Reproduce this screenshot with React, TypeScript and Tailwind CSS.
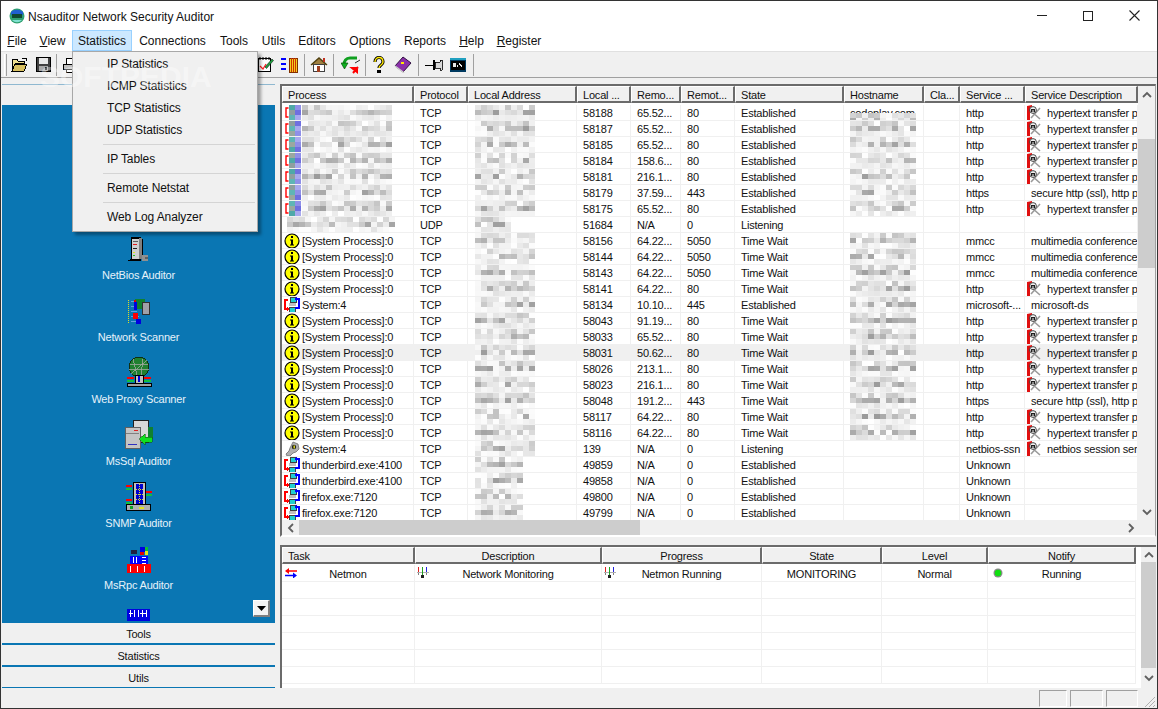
import type { ReactNode } from "react";

const FONT = "font-['Liberation_Sans',Arial,sans-serif]";

type Row = {
  process: string;
  icon: "blur" | "blurGrey" | "info" | "conn" | "key";
  proto: string;
  port: string;
  remote: string;
  rport: string;
  state: string;
  host: boolean;
  service: string;
  desc: string;
  skull?: boolean;
};

const HTTP = "hypertext transfer p";
const MM = "multimedia conference";
const SSL = "secure http (ssl), http p";

function r(
  process: string,
  icon: Row["icon"],
  proto: string,
  port: string,
  remote: string,
  rport: string,
  state: string,
  host: boolean,
  service: string,
  desc: string,
): Row {
  return { process, icon, proto, port, remote, rport, state, host, service, desc, skull: desc === HTTP || desc.startsWith("netbios") };
}

const SP = "[System Process]:0";
const rows: Row[] = [
  r("", "blur", "TCP", "58188", "65.52...", "80", "Established", true, "http", HTTP),
  r("", "blur", "TCP", "58187", "65.52...", "80", "Established", true, "http", HTTP),
  r("", "blur", "TCP", "58185", "65.52...", "80", "Established", true, "http", HTTP),
  r("", "blur", "TCP", "58184", "158.6...", "80", "Established", true, "http", HTTP),
  r("", "blur", "TCP", "58181", "216.1...", "80", "Established", true, "http", HTTP),
  r("", "blur", "TCP", "58179", "37.59...", "443", "Established", true, "https", SSL),
  r("", "blur", "TCP", "58175", "65.52...", "80", "Established", true, "http", HTTP),
  r("", "blurGrey", "UDP", "51684", "N/A", "0", "Listening", false, "", ""),
  r(SP, "info", "TCP", "58156", "64.22...", "5050", "Time Wait", true, "mmcc", MM),
  r(SP, "info", "TCP", "58144", "64.22...", "5050", "Time Wait", true, "mmcc", MM),
  r(SP, "info", "TCP", "58143", "64.22...", "5050", "Time Wait", true, "mmcc", MM),
  r(SP, "info", "TCP", "58141", "64.22...", "80", "Time Wait", true, "http", HTTP),
  r("System:4", "conn", "TCP", "58134", "10.10...", "445", "Established", true, "microsoft-...", "microsoft-ds"),
  r(SP, "info", "TCP", "58043", "91.19...", "80", "Time Wait", true, "http", HTTP),
  r(SP, "info", "TCP", "58033", "65.52...", "80", "Time Wait", true, "http", HTTP),
  r(SP, "info", "TCP", "58031", "50.62...", "80", "Time Wait", true, "http", HTTP),
  r(SP, "info", "TCP", "58026", "213.1...", "80", "Time Wait", true, "http", HTTP),
  r(SP, "info", "TCP", "58023", "216.1...", "80", "Time Wait", true, "http", HTTP),
  r(SP, "info", "TCP", "58048", "191.2...", "443", "Time Wait", true, "https", SSL),
  r(SP, "info", "TCP", "58117", "64.22...", "80", "Time Wait", true, "http", HTTP),
  r(SP, "info", "TCP", "58116", "64.22...", "80", "Time Wait", true, "http", HTTP),
  r("System:4", "key", "TCP", "139", "N/A", "0", "Listening", false, "netbios-ssn", "netbios session ser"),
  r("thunderbird.exe:4100", "conn", "TCP", "49859", "N/A", "0", "Established", false, "Unknown", ""),
  r("thunderbird.exe:4100", "conn", "TCP", "49858", "N/A", "0", "Established", false, "Unknown", ""),
  r("firefox.exe:7120", "conn", "TCP", "49800", "N/A", "0", "Established", false, "Unknown", ""),
  r("firefox.exe:7120", "conn", "TCP", "49799", "N/A", "0", "Established", false, "Unknown", ""),
];

// blurred-out cells in the capture: three lines of pale squares, darkest in the middle
function Mosaic({ seed, cols }: { seed: number; cols: number }) {
  const depth = [60, 100, 30];
  const cells: ReactNode[] = [];
  for (let i = 0; i < cols * 3; i++) {
    const n = Math.abs(Math.sin(seed * 12.9898 + i * 78.233) * 43758.5453) % 1;
    const g = Math.round(255 - n * depth[Math.floor(i / cols)]);
    cells.push(<span key={i} className="block h-[5px] w-[6px]" style={{ background: `rgb(${g},${g},${g})` }} />);
  }
  return (
    <div className="flex flex-wrap" style={{ width: cols * 6 }}>
      {cells}
    </div>
  );
}

function ColorBar({ seed }: { seed: number }) {
  const colors = ["#4fa8a8", "#8f9f9f", "#5fb5b5", "#9aa8a0"];
  const side = ["#8f8fe8", "#6f6fe0", "#a8a8ee"];
  return (
    <div className="flex h-4 w-3 shrink-0 flex-col">
      {[0, 1, 2].map((i) => (
        <div key={i} className="flex h-[5px]">
          <span className="h-full w-[6px]" style={{ background: colors[(seed + i) % 4] }} />
          <span className="h-full w-[6px]" style={{ background: side[(seed + i) % 3] }} />
        </div>
      ))}
    </div>
  );
}

function InfoIcon() {
  return (
    <svg width="16" height="16" viewBox="0 0 16 16" className="shrink-0">
      <circle cx="8" cy="8" r="7" fill="#ffff00" stroke="#000" strokeWidth="1.2" />
      <rect x="7" y="3" width="2" height="2" fill="#000" />
      <path d="M6 6.5h3v5h1v1H6v-1h1v-4H6z" fill="#000" />
    </svg>
  );
}

function ConnIcon() {
  return (
    <svg width="16" height="16" viewBox="0 0 16 16" className="shrink-0" shapeRendering="crispEdges">
      <rect x="6" y="0" width="6" height="5" fill="#20d0d0" stroke="#404040" strokeWidth="1" />
      <rect x="5" y="10" width="6" height="5" fill="#20d0d0" stroke="#404040" strokeWidth="1" />
      <rect x="5" y="6" width="7" height="3" fill="#c0c0c0" />
      <path d="M4 3H1v9h4" fill="none" stroke="#ff0000" strokeWidth="1.2" />
      <path d="M3 10l3 2-3 2z" fill="#ff0000" />
      <path d="M12 2h3v9h-4" fill="none" stroke="#0000ff" strokeWidth="1.2" />
      <path d="M13 0l-3 2 3 2z" fill="#0000ff" />
    </svg>
  );
}

function KeyIcon() {
  return (
    <svg width="16" height="16" viewBox="0 0 16 16" className="shrink-0">
      <path d="M9 1l5 2 1 5-3 3-3 1-3 3H3l-1-2 3-3 1-3z" fill="#b0b0b0" stroke="#606060" strokeWidth="0.7" />
      <circle cx="10" cy="6" r="2.2" fill="#202020" />
      <rect x="9.5" y="4.5" width="1.4" height="3" fill="#e8e020" />
    </svg>
  );
}

function SkullIcon() {
  return (
    <svg width="16" height="15" viewBox="0 0 16 15" className="shrink-0">
      <path d="M6 6l9 8M15 3L6 13" stroke="#9a9a9a" strokeWidth="1.6" />
      <path d="M2 1l5-1v2H5v13H2z" fill="#e01010" />
      <circle cx="8" cy="5" r="3.4" fill="#f0f0f0" stroke="#202020" strokeWidth="0.8" />
      <rect x="6" y="4" width="4" height="3" fill="#202020" />
      <rect x="7.500" y="5" width="1" height="2" fill="#f0f0f0" />
    </svg>
  );
}

function Chevron({ dir, className = "" }: { dir: "up" | "down" | "left" | "right"; className?: string }) {
  const d = {
    up: "M1 7l4-4 4 4",
    down: "M1 3l4 4 4-4",
    left: "M7 1L3 5l4 4",
    right: "M3 1l4 4-4 4",
  }[dir];
  return (
    <svg width="10" height="10" viewBox="0 0 10 10" className={className}>
      <path d={d} fill="none" stroke="#606060" strokeWidth="1.8" />
    </svg>
  );
}

function HeaderCell({ children, center }: { children: ReactNode; center?: boolean }) {
  return (
    <div
      className={`flex h-full items-center overflow-hidden whitespace-nowrap border-t border-l border-t-white border-l-white border-r-2 border-b-2 border-r-[#6b6b6b] border-b-[#6b6b6b] bg-[#f0f0f0] pt-[2px] ${center ? "justify-center" : "pl-[5px]"}`}
    >
      {children}
    </div>
  );
}

const topHeaders = ["Process", "Protocol", "Local Address", "Local ...", "Remo...", "Remot...", "State", "Hostname", "Cla...", "Service ...", "Service Description"];
const topGrid = "grid grid-cols-[132px_54px_109px_54px_50px_54px_109px_80px_36px_65px_113px]";

function Cell({ children, extra = "" }: { children?: ReactNode; extra?: string }) {
  return (
    <div className={`relative flex h-4 items-center overflow-hidden whitespace-nowrap border-r border-b border-[#f0f0f0] ${extra}`}>
      {children}
    </div>
  );
}

function T({ children, className = "" }: { children: ReactNode; className?: string }) {
  return <span className={`relative top-px ${className}`}>{children}</span>;
}

function ProcessTable() {
  return (
    <div className="h-[434px] w-[856px] overflow-hidden bg-white">
      <div className={`${topGrid} h-[17px]`}>
        {topHeaders.map((h) => (
          <HeaderCell key={h}>{h}</HeaderCell>
        ))}
      </div>
      <div className="h-[2px]" />
      {rows.map((row, i) => (
        <div key={row.port} className={`${topGrid} ${row.port === "58031" ? "bg-[#f0f0f0]" : ""}`}>
          <Cell extra="pl-[2px]">
            {row.icon === "info" && <InfoIcon />}
            {row.icon === "conn" && <ConnIcon />}
            {row.icon === "key" && <KeyIcon />}
            {row.icon === "blur" && (
              <>
                <svg width="4" height="12" viewBox="0 0 4 12" className="ml-[1px] shrink-0">
                  <path d="M3.5 1H1v9h2.5" fill="none" stroke="#ff0000" strokeWidth="1.4" />
                </svg>
                <ColorBar seed={i} />
                <div className="ml-[1px]">
                  <Mosaic seed={i + 1} cols={15} />
                </div>
              </>
            )}
            {row.icon === "blurGrey" && (
              <div className="ml-[3px] flex items-center">
                <Mosaic seed={i + 1} cols={18} />
              </div>
            )}
            {row.process && <T className="ml-[2px]">{row.process}</T>}
          </Cell>
          <Cell extra="pl-[6px]">
            <T>{row.proto}</T>
          </Cell>
          <Cell extra="pl-[7px]">
            <Mosaic seed={i + 40} cols={row.icon === "conn" && i > 20 ? 8 : i === 7 ? 6 : 10} />
          </Cell>
          <Cell extra="pl-[6px]">
            <T>{row.port}</T>
          </Cell>
          <Cell extra="pl-[6px]">
            <T>{row.remote}</T>
          </Cell>
          <Cell extra="pl-[6px]">
            <T>{row.rport}</T>
          </Cell>
          <Cell extra="pl-[6px]">
            <T>{row.state}</T>
          </Cell>
          <Cell extra="pl-[6px]">
            {i === 0 ? (
              <>
                <span className="absolute left-[6px] top-0">codeplay.com</span>
                <div className="absolute left-[6px] top-[8px]">
                  <Mosaic seed={i + 80} cols={11} />
                </div>
              </>
            ) : (
              row.host && <Mosaic seed={i + 80} cols={11} />
            )}
          </Cell>
          <Cell />
          <Cell extra="pl-[6px]">
            <T>{row.service}</T>
          </Cell>
          <Cell extra="pl-[6px]">
            {row.skull && (
              <span className="mr-[1px] ml-[-6px]">
                <SkullIcon />
              </span>
            )}
            {row.desc && <T className={row.skull ? "ml-[5px]" : ""}>{row.desc}</T>}
          </Cell>
        </div>
      ))}
    </div>
  );
}

const bottomGrid = "grid grid-cols-[133px_187px_160px_120px_106px_148px]";

function ArrowsSmall() {
  return (
    <svg width="12" height="10" viewBox="0 0 12 10" className="absolute left-[3px] top-[3px]">
      <path d="M3 3h9" stroke="#ff0000" strokeWidth="1.5" />
      <path d="M4 0L0 3l4 3z" fill="#ff0000" />
      <path d="M0 7.5h9" stroke="#0000ff" strokeWidth="1.5" />
      <path d="M8 4.5l4 3-4 3z" fill="#0000ff" />
    </svg>
  );
}

function MonitorIcon() {
  return (
    <svg width="12" height="12" viewBox="0 0 12 12" className="absolute left-[2px] top-[2px]" shapeRendering="crispEdges">
      <rect x="0" y="5" width="12" height="1" fill="#b0b0b0" />
      <rect x="1" y="0" width="1" height="5" fill="#e02020" />
      <rect x="5" y="0" width="1" height="9" fill="#20a020" />
      <rect x="9" y="0" width="1" height="5" fill="#2020e0" />
      <rect x="4" y="8" width="3" height="3" fill="#202020" />
      <rect x="1" y="6" width="1" height="2" fill="#808080" />
      <rect x="9" y="6" width="1" height="2" fill="#808080" />
    </svg>
  );
}

function BottomCell({ children }: { children?: ReactNode }) {
  return <div className="relative flex h-[17px] items-center justify-center border-r border-b border-[#f0f0f0]">{children}</div>;
}

function TaskTable() {
  const empties = [1, 2, 3, 4, 5, 6];
  return (
    <div className="h-[141px] w-[859px] overflow-hidden bg-white">
      <div className={`${bottomGrid} h-[17px] w-[854px]`}>
        <HeaderCell>Task</HeaderCell>
        <HeaderCell center>Description</HeaderCell>
        <HeaderCell center>Progress</HeaderCell>
        <HeaderCell center>State</HeaderCell>
        <HeaderCell center>Level</HeaderCell>
        <HeaderCell center>Notify</HeaderCell>
      </div>
      <div className="h-px" />
      <div className={bottomGrid}>
        <BottomCell>
          <ArrowsSmall />
          <T>Netmon</T>
        </BottomCell>
        <BottomCell>
          <MonitorIcon />
          <T>Network Monitoring</T>
        </BottomCell>
        <BottomCell>
          <MonitorIcon />
          <T>Netmon Running</T>
        </BottomCell>
        <BottomCell>
          <T>MONITORING</T>
        </BottomCell>
        <BottomCell>
          <T>Normal</T>
        </BottomCell>
        <BottomCell>
          <svg width="10" height="10" viewBox="0 0 10 10" className="absolute left-[5px] top-[3px]">
            <circle cx="5" cy="5" r="4.5" fill="#8a8a8a" />
            <circle cx="5" cy="5" r="3.2" fill="#10e010" />
          </svg>
          <T>Running</T>
        </BottomCell>
      </div>
      {empties.map((e) => (
        <div key={e} className={bottomGrid}>
          {[1, 2, 3, 4, 5, 6].map((c) => (
            <BottomCell key={c} />
          ))}
        </div>
      ))}
    </div>
  );
}

function Sep() {
  return <div className="mx-[1px] h-[22px] w-px bg-[#a0a0a0]" />;
}

function Tool({ children, w = "w-6" }: { children: ReactNode; w?: string }) {
  return <div className={`flex h-[24px] items-center justify-center ${w}`}>{children}</div>;
}

function Toolbar() {
  return (
    <div className="flex h-[26px] items-center border-b border-[#a0a0a0] bg-[#f0f0f0] pl-[3px]">
      <div className="h-[22px] w-[3px] border-l border-r border-l-white border-r-[#a0a0a0]" />
      <Tool>
        <svg width="17" height="15" viewBox="0 0 17 15" shapeRendering="crispEdges">
          <path d="M1 2h5l1 2h6v2H5L1 13z" fill="#f0e090" stroke="#000" />
          <path d="M4 7h12l-3 7H1z" fill="#d8c060" stroke="#000" />
          <path d="M11 1h4v3" fill="none" stroke="#000" />
        </svg>
      </Tool>
      <Tool>
        <svg width="15" height="15" viewBox="0 0 15 15" shapeRendering="crispEdges">
          <rect x="0.5" y="0.5" width="14" height="14" fill="#404040" stroke="#000" />
          <rect x="3" y="1" width="9" height="6" fill="#e8e8e8" />
          <rect x="3" y="9" width="9" height="5" fill="#a8a8a8" />
          <rect x="9" y="10" width="2" height="3" fill="#000" />
        </svg>
      </Tool>
      <Sep />
      <Tool>
        <svg width="16" height="16" viewBox="0 0 16 16" shapeRendering="crispEdges">
          <rect x="4" y="1" width="8" height="6" fill="#fff" stroke="#000" />
          <rect x="1" y="7" width="14" height="5" fill="#c0c0c0" stroke="#000" />
          <rect x="4" y="12" width="8" height="3" fill="#fff" stroke="#000" />
        </svg>
      </Tool>
      <div className="w-[171px]" />
      <Tool>
        <svg width="17" height="17" viewBox="0 0 17 17">
          <rect x="1.5" y="2.5" width="12" height="13" fill="#fff" stroke="#000" />
          <path d="M3 1v3M6 1v3M9 1v3M12 1v3" stroke="#000" />
          <path d="M3 10l3 3 3-5" stroke="#ff2020" fill="none" strokeWidth="1.2" />
          <path d="M8 11l7-8 1.500 1.500-7 8z" fill="#20a040" stroke="#000" strokeWidth="0.5" />
        </svg>
      </Tool>
      <Tool>
        <svg width="18" height="16" viewBox="0 0 18 16" shapeRendering="crispEdges">
          <path d="M1 2h5M1 7h5M1 12h5" stroke="#0000ff" strokeWidth="1.4" />
          <rect x="9" y="1" width="8" height="14" fill="#f0d020" stroke="#803000" />
          <path d="M11 1v14M13 1v14M15 1v14" stroke="#d03000" />
        </svg>
      </Tool>
      <div className="w-[2px]" />
      <Sep />
      <div className="w-[1px]" />
      <Tool>
        <svg width="18" height="17" viewBox="0 0 18 17">
          <path d="M1 9l8-7 8 7" fill="#a08040" stroke="#504010" strokeWidth="1.4" />
          <rect x="3.500" y="8.500" width="11" height="7" fill="#fff" stroke="#404040" />
          <rect x="7" y="10" width="3" height="6" fill="#a04020" />
          <rect x="13" y="2" width="2" height="4" fill="#c03020" />
        </svg>
      </Tool>
      <div className="w-[1px]" />
      <Sep />
      <div className="w-1" />
      <Tool>
        <svg width="20" height="18" viewBox="0 0 20 18">
          <path d="M16 2H9C5 2 3 5 3 9" fill="none" stroke="#10a020" strokeWidth="3" />
          <path d="M0 7h7l-3.500 6z" fill="#10b020" stroke="#004000" strokeWidth="0.6" />
          <path d="M12 17l5-6M11 12h5v4z" stroke="#ff0000" strokeWidth="2" fill="#ff0000" />
          <path d="M14 7l5-3" stroke="#303030" />
        </svg>
      </Tool>
      <div className="w-[1px]" />
      <Sep />
      <Tool>
        <svg width="12" height="17" viewBox="0 0 12 17">
          <path d="M2 6c0-6 8-6 8 0 0 3-4 3-4 6" fill="none" stroke="#000" strokeWidth="3.2" />
          <path d="M2 6c0-6 8-6 8 0 0 3-4 3-4 6" fill="none" stroke="#ffe800" strokeWidth="1.4" />
          <rect x="4" y="14" width="4" height="3" fill="#000" />
        </svg>
      </Tool>
      <Tool>
        <svg width="18" height="17" viewBox="0 0 18 17">
          <path d="M1 10L9 1l8 6-8 9z" fill="#8a30a8" stroke="#301040" />
          <path d="M1 10l8 6 1 1" stroke="#d0d0d0" strokeWidth="1.5" fill="none" />
          <rect x="7" y="6" width="3" height="2" fill="#ffe800" />
        </svg>
      </Tool>
      <div className="w-[2px]" />
      <Sep />
      <div className="w-[2px]" />
      <Tool>
        <svg width="18" height="12" viewBox="0 0 18 12" shapeRendering="crispEdges">
          <path d="M0 6h8" stroke="#000" />
          <path d="M8 1h2v10H8z" fill="#000" />
          <path d="M10 3h5V1h2v10h-2V9h-5z" fill="#d8d8d8" stroke="#000" strokeWidth="0.8" />
        </svg>
      </Tool>
      <Tool>
        <svg width="16" height="14" viewBox="0 0 16 14" shapeRendering="crispEdges">
          <rect width="16" height="14" fill="#003a60" />
          <rect x="1" y="3" width="14" height="9" fill="#000" />
          <rect x="0" y="0" width="16" height="2" fill="#20a0c0" />
          <rect x="3" y="5" width="3" height="4" fill="#e8e8e8" />
          <rect x="7" y="7" width="1" height="2" fill="#e8e8e8" />
          <path d="M9 5l3 4" stroke="#e8e8e8" />
        </svg>
      </Tool>
      <div className="w-[2px]" />
      <Sep />
    </div>
  );
}

function NetBiosIcon() {
  return (
    <svg width="24" height="28" viewBox="0 0 24 28" shapeRendering="crispEdges">
      <path d="M4 2h10v2h2v20h-2v2H1v-1l3-1z" fill="#000" />
      <rect x="5" y="4" width="7" height="20" fill="#d0d0d0" />
      <rect x="12" y="3" width="3" height="21" fill="#808080" />
      <rect x="6" y="6" width="5" height="1" fill="#606060" />
      <rect x="6" y="9" width="4" height="1" fill="#e02020" />
      <rect x="6" y="13" width="4" height="1" fill="#202020" />
      <rect x="6" y="17" width="2" height="1" fill="#e0e020" />
      <rect x="6" y="20" width="2" height="1" fill="#20c020" />
      <rect x="15" y="20" width="6" height="6" fill="#909090" />
      <rect x="18" y="22" width="3" height="2" fill="#606060" />
    </svg>
  );
}

function ScannerIcon() {
  return (
    <svg width="24" height="26" viewBox="0 0 24 26" shapeRendering="crispEdges">
      <path d="M1 1v23" stroke="#e0e020" strokeDasharray="1 1" />
      <path d="M4 2h8M4 7h7M4 12h6M4 17h8M4 22h8" stroke="#60a0e0" />
      <rect x="8" y="0" width="10" height="10" fill="#108030" />
      <rect x="7" y="3" width="3" height="8" fill="#0000e0" />
      <rect x="7" y="1" width="2" height="2" fill="#e00000" />
      <rect x="15" y="3" width="7" height="12" fill="#a0a0a8" stroke="#303030" />
      <rect x="6" y="14" width="5" height="6" fill="#ff0000" />
      <rect x="9" y="20" width="5" height="5" fill="#0000e0" />
    </svg>
  );
}

function ProxyIcon() {
  return (
    <svg width="26" height="31" viewBox="0 0 26 31" shapeRendering="crispEdges">
      <circle cx="13" cy="11" r="10" fill="#208030" stroke="#103010" strokeWidth="1" />
      <path d="M4 8h18M3 13h20M7 3l4 16M17 3l-2 16M5 18l16-14" stroke="#a0a8a0" strokeWidth="0.8" />
      <rect x="9" y="19" width="8" height="8" fill="#c0c0c0" stroke="#000" />
      <rect x="12" y="20" width="2" height="6" fill="#0000e0" />
      <path d="M1 22h7M18 22h7" stroke="#ff0000" strokeWidth="1.4" />
      <path d="M1 25h7M18 25h7" stroke="#10c040" strokeWidth="1.4" />
      <rect x="1" y="27" width="24" height="3" fill="#a0a0a0" stroke="#000" />
    </svg>
  );
}

function SqlIcon() {
  return (
    <svg width="30" height="30" viewBox="0 0 30 30" shapeRendering="crispEdges">
      <rect x="9.500" y="1.500" width="15" height="22" fill="#d8d8d8" stroke="#202020" />
      <rect x="24" y="8" width="5" height="12" fill="#108030" />
      <rect x="1" y="8" width="15" height="21" fill="#c4c4c4" stroke="#606060" />
      <rect x="2" y="14" width="13" height="1" fill="#808080" />
      <rect x="10" y="11" width="4" height="1" fill="#e02020" />
      <rect x="4" y="25" width="9" height="1" fill="#3030c0" />
      <path d="M15 20l6-5v3h7v5h-7v3z" fill="#10e020" stroke="#106010" strokeWidth="0.6" />
    </svg>
  );
}

function SnmpIcon() {
  return (
    <svg width="26" height="29" viewBox="0 0 26 29" shapeRendering="crispEdges">
      <rect x="7.500" y="0.500" width="12" height="22" fill="#c0c0c0" stroke="#000" />
      <rect x="10" y="2" width="7" height="20" fill="#0000d0" />
      <path d="M10 7h7M10 12h7M10 17h7M13 2v20" stroke="#e0e020" strokeDasharray="1 1" />
      <path d="M0 4h6M20 10h6M0 18h6" stroke="#ff0000" strokeWidth="1.4" />
      <path d="M0 7h6M20 13h6M0 21h6" stroke="#10c040" strokeWidth="1.4" />
      <rect x="0.500" y="22.500" width="24" height="6" fill="#b0b0b0" stroke="#000" />
      <rect x="4" y="24" width="3" height="3" fill="#10a020" />
      <rect x="13" y="25" width="5" height="2" fill="#e0e020" />
    </svg>
  );
}

function RpcIcon() {
  return (
    <svg width="24" height="26" viewBox="0 0 24 26" shapeRendering="crispEdges">
      <rect x="4" y="3" width="6" height="4" fill="#202040" />
      <rect x="13" y="0" width="5" height="5" fill="#0000e0" />
      <rect x="18" y="0" width="3" height="4" fill="#10c030" />
      <rect x="18" y="4" width="3" height="4" fill="#e8e020" />
      <rect x="13" y="5" width="4" height="3" fill="#e00000" />
      <rect x="3" y="9" width="18" height="8" fill="#0000ff" />
      <rect x="0" y="17" width="24" height="9" fill="#ff0000" />
      <path d="M6 10v6M9 10v6M15 10h4M15 13h4M15 16h4M3 19v6M10 19v6M17 19v6" stroke="#fff" />
    </svg>
  );
}

function NavItem({ icon, label }: { icon: ReactNode; label: string }) {
  return (
    <div className="flex h-[62px] flex-col items-center text-[#e6f2fa]">
      <div className="flex h-[34px] items-end">{icon}</div>
      <div className="mt-1 h-[16px] leading-[16px]">{label}</div>
    </div>
  );
}

function Sidebar() {
  return (
    <div className="ml-px flex w-[273px] flex-col bg-[#0a76b3]">
      <div className="h-[21px] border-t border-[#8fb8d0] bg-[#f0f0f0]" />
      <div className="relative h-[518px] overflow-hidden">
        <div className="h-[124px]" />
        <NavItem icon={<NetBiosIcon />} label="NetBios Auditor" />
        <NavItem icon={<ScannerIcon />} label="Network Scanner" />
        <NavItem icon={<ProxyIcon />} label="Web Proxy Scanner" />
        <NavItem icon={<SqlIcon />} label="MsSql Auditor" />
        <NavItem icon={<SnmpIcon />} label="SNMP Auditor" />
        <NavItem icon={<RpcIcon />} label="MsRpc Auditor" />
        <div className="flex justify-center pt-[8px]">
          <svg width="23" height="12" viewBox="0 0 23 12" shapeRendering="crispEdges">
            <rect width="23" height="12" fill="#0000e0" />
            <path d="M3 1v7M7 1v7M11 1v7M15 1v7M19 1v7M2 4h4M13 4h6" stroke="#fff" />
          </svg>
        </div>
        <div className="absolute left-[251px] top-[495px] flex h-[17px] w-[17px] items-center justify-center border-t border-l border-r-2 border-b-2 border-t-white border-l-white border-r-[#808080] border-b-[#808080] bg-[#f4f4f4]">
          <svg width="9" height="5" viewBox="0 0 9 5">
            <path d="M0 0h9L4.500 5z" fill="#000" />
          </svg>
        </div>
      </div>
      <div className="flex h-5 items-center justify-center bg-[#f0f0f0] pt-[2px]">Tools</div>
      <div className="mt-[2px] flex h-5 items-center justify-center bg-[#f0f0f0] pt-[2px]">Statistics</div>
      <div className="mt-[2px] flex h-5 items-center justify-center bg-[#f0f0f0] pt-[2px]">Utils</div>
    </div>
  );
}

const menus = [
  { label: "File", u: true, w: "w-[32px]" },
  { label: "View", u: true, w: "w-[39px]" },
  { label: "Statistics", active: true, w: "w-[60px]" },
  { label: "Connections", w: "w-[81px]" },
  { label: "Tools", w: "w-[42px]" },
  { label: "Utils", w: "w-[37px]" },
  { label: "Editors", w: "w-[50px]" },
  { label: "Options", w: "w-[56px]" },
  { label: "Reports", w: "w-[54px]" },
  { label: "Help", u: true, w: "w-[39px]" },
  { label: "Register", u: true, w: "w-[56px]" },
];

function DropItem({ label }: { label: string }) {
  return <div className="flex h-[22px] items-center pl-[34px]">{label}</div>;
}

function DropSep() {
  return <div className="mt-[3px] mb-[3px] ml-[30px] h-px w-[152px] bg-[#d4d4d4]" />;
}

export default function App() {
  return (
    <div className={`relative flex h-[709px] w-[1158px] flex-col overflow-hidden border border-[#333333] bg-[#f0f0f0] text-[11px] tracking-[-0.2px] text-[#111] ${FONT}`}>
      {/* Title bar */}
      <div className="flex h-[29px] shrink-0 items-center bg-white pl-[8px] tracking-normal">
        <svg width="16" height="16" viewBox="0 0 16 16">
          <circle cx="8" cy="8" r="7.500" fill="#30a070" />
          <path d="M2 4c3-3 9-3 12 0v3H2z" fill="#2060d0" />
          <rect x="3" y="6" width="10" height="4" fill="#104830" />
          <path d="M3 12c3 3 7 3 10 0z" fill="#80e0d0" />
        </svg>
        <span className="relative top-px ml-[3px] text-[12px]">Nsauditor Network Security Auditor</span>
        <div className="ml-auto flex h-full">
          <div className="flex w-[46px] items-center justify-center">
            <div className="h-px w-[10px] bg-[#222]" />
          </div>
          <div className="flex w-[46px] items-center justify-center">
            <div className="h-[10px] w-[10px] border border-[#222]" />
          </div>
          <div className="flex w-[46px] items-center justify-center">
            <svg width="11" height="11" viewBox="0 0 11 11">
              <path d="M0.500 0.500l10 10M10.500 0.500l-10 10" stroke="#222" strokeWidth="1.100" />
            </svg>
          </div>
        </div>
      </div>

      {/* Menu bar */}
      <div className="flex h-[21px] shrink-0 items-center bg-white text-[12px] tracking-normal">
        {menus.map((m) => (
          <div
            key={m.label}
            className={`flex h-full items-center justify-center ${m.w} ${m.active ? "border border-[#99d1ff] bg-[#cce8ff]" : ""}`}
          >
            {m.u ? (
              <span>
                <span className="underline">{m.label[0]}</span>
                {m.label.slice(1)}
              </span>
            ) : (
              m.label
            )}
          </div>
        ))}
      </div>
      <div className="h-px shrink-0 bg-[#e0e0e0]" />
      <Toolbar />

      {/* Main area */}
      <div className="flex h-[610px] shrink-0 pt-[6px]">
        <Sidebar />
        <div className="w-[5px] shrink-0" />
        <div className="flex w-[876px] shrink-0 flex-col">
          <div className="flex h-[453px] flex-col border-t-2 border-l-2 border-r border-b-2 border-t-[#6b6b6b] border-l-[#6b6b6b] border-r-[#a0a0a0] border-b-white">
            <div className="flex h-[434px]">
              <ProcessTable />
              <div className="flex w-[17px] flex-col items-center bg-[#f0f0f0]">
                <div className="flex h-[17px] items-center justify-center">
                  <Chevron dir="up" />
                </div>
                <div className="mt-[36px] h-[129px] w-full bg-[#cdcdcd]" />
                <div className="mt-auto flex h-[17px] items-center justify-center">
                  <Chevron dir="down" />
                </div>
              </div>
            </div>
            <div className="flex h-[15px] items-center bg-[#f0f0f0]">
              <div className="flex w-[17px] justify-center">
                <Chevron dir="left" />
              </div>
              <div className="h-full w-[341px] bg-[#cdcdcd]" />
              <div className="mr-[16px] ml-auto flex w-[17px] justify-center">
                <Chevron dir="right" />
              </div>
            </div>
          </div>
          <div className="h-2 shrink-0" />
          <div className="flex h-[143px] border-t-2 border-l-2 border-t-[#6b6b6b] border-l-[#6b6b6b]">
            <TaskTable />
            <div className="flex w-[15px] flex-col items-center bg-[#f0f0f0]">
              <div className="flex h-[15px] items-center justify-center">
                <Chevron dir="up" />
              </div>
              <div className="h-[106px] w-full bg-[#cdcdcd]" />
              <div className="flex h-5 items-center justify-center">
                <Chevron dir="down" />
              </div>
            </div>
          </div>
        </div>
      </div>

      {/* Status bar */}
      <div className="flex h-5 shrink-0 items-center justify-end bg-[#f0f0f0] pr-[1px]">
        <div className="h-[17px] w-[28px] border border-t-[#a0a0a0] border-l-[#a0a0a0] border-r-white border-b-white" />
        <div className="ml-[3px] h-[17px] w-[33px] border border-t-[#a0a0a0] border-l-[#a0a0a0] border-r-white border-b-white" />
        <div className="ml-[3px] h-[17px] w-[32px] border border-t-[#a0a0a0] border-l-[#a0a0a0] border-r-white border-b-white" />
        <svg width="18" height="16" viewBox="0 0 18 16" className="self-end">
          <path d="M17 5L7 15M17 9l-6 6M17 13l-2 2" stroke="#b0b0b0" />
        </svg>
      </div>

      {/* Statistics drop-down */}
      <div className="absolute left-[71px] top-[50px] h-[181px] w-[186px] border border-[#a8a8a8] bg-[#f0f0f0] pt-px text-[12px] tracking-[-0.1px] shadow-[3px_3px_3px_rgba(0,0,0,0.35)]">
        <DropItem label="IP Statistics" />
        <DropItem label="ICMP Statistics" />
        <DropItem label="TCP Statistics" />
        <DropItem label="UDP Statistics" />
        <DropSep />
        <DropItem label="IP Tables" />
        <DropSep />
        <DropItem label="Remote Netstat" />
        <DropSep />
        <DropItem label="Web Log Analyzer" />
      </div>

      {/* Watermark */}
      <div className="pointer-events-none absolute left-[39px] top-[53px] text-[30px] font-bold tracking-normal text-white/40">SOFTPEDIA</div>
    </div>
  );
}
